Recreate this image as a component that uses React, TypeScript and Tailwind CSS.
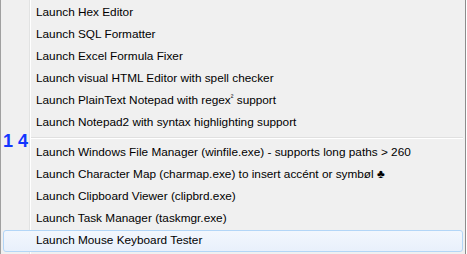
import React from "react";

const topItems = [
  "Launch Hex Editor",
  "Launch SQL Formatter",
  "Launch Excel Formula Fixer",
  "Launch visual HTML Editor with spell checker",
  "PLAIN",
  "Launch Notepad2 with syntax highlighting support",
];

const bottomItems = [
  "Launch Windows File Manager (winfile.exe) - supports long paths > 260",
  "Launch Character Map (charmap.exe) to insert accént or symbøl ♣",
  "Launch Clipboard Viewer (clipbrd.exe)",
  "Launch Task Manager (taskmgr.exe)",
];

function Row({ label }: { label: string }) {
  return (
    <div className="h-[22px] flex items-center pl-[35px] text-[11.8px] text-black whitespace-nowrap">
      {label === "PLAIN" ? (
        <span>
          Launch PlainText Notepad with regex<sup className="text-[8px]">²</sup> support
        </span>
      ) : (
        label
      )}
    </div>
  );
}

export default function App() {
  return (
    <div className="w-[467px] h-[254px] bg-white overflow-hidden">
      <div
        className="relative w-[466px] h-[254px] border-l border-r border-l-[#a0a0a0] border-r-[#8c8c8c] py-[2px] bg-[linear-gradient(to_right,#f0f0f0_28px,#e2e3e3_28px,#e2e3e3_29px,#ffffff_29px,#ffffff_30px,#f0f0f0_30px)]"
        style={{ fontFamily: '"Liberation Sans", Arial, sans-serif' }}
      >
        {topItems.map((t) => (
          <Row key={t} label={t} />
        ))}

        <div className="h-[8px] flex flex-col justify-center ml-[30px] mr-[2px]">
          <div className="h-px bg-[#e0e0e0]" />
          <div className="h-px bg-white" />
        </div>

        {bottomItems.map((t) => (
          <Row key={t} label={t} />
        ))}

        <div className="mx-[2px] h-[22px] flex items-center pl-[32px] text-[11.8px] text-black rounded-[3px] border border-[#b3d6f7] bg-[linear-gradient(to_bottom,#f2f7fd,#e8f0fb)]">
          Launch Mouse Keyboard Tester
        </div>

        <div className="absolute left-[2px] top-[132px] text-[18px] font-bold text-[#1236ff] leading-none">
          1 4
        </div>
      </div>
    </div>
  );
}
